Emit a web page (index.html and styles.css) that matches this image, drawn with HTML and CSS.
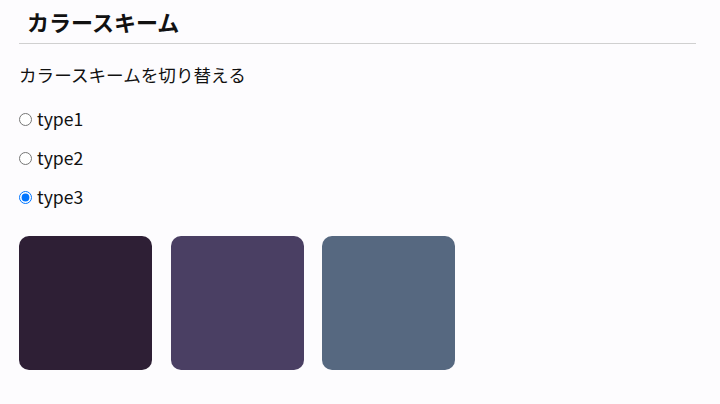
FILE: index.html
```html
<!DOCTYPE html>
<html lang="ja">
<head>
<meta charset="utf-8">
<link rel="stylesheet" href="styles.css">
</head>
<body>
<div class="page">
  <h1 class="title">カラースキーム</h1>
  <p class="desc">カラースキームを切り替える</p>
  <div class="options">
    <label class="opt"><input type="radio" name="t"> type1</label>
    <label class="opt"><input type="radio" name="t"> type2</label>
    <label class="opt"><input type="radio" name="t" checked> type3</label>
  </div>
  <div class="swatches">
    <div class="sw c1"></div>
    <div class="sw c2"></div>
    <div class="sw c3"></div>
  </div>
</div>
</body>
</html>
```
FILE: styles.css
```css
html, body { margin: 0; background: #fdfcfe; }
body { font-family: "Noto Sans CJK JP", "Noto Sans", sans-serif; color: #111; }
.page { width: 677px; margin-left: 19px; }
.title {
  margin: 0;
  padding: 6px 0 7px 8px;
  font-size: 22px;
  line-height: 30px;
  font-weight: 700;
  border-bottom: 1px solid #d0d0d0;
}
.desc { margin: 18px 0 0; font-size: 17.6px; line-height: 26px; }
.options { display: flex; flex-direction: column; gap: 13px; margin-top: 18px; }
.opt { display: flex; align-items: center; gap: 5px; font-size: 17.6px; line-height: 26px; }
.opt input { margin: 0; width: 13px; height: 13px; }
.swatches { display: flex; gap: 18.5px; margin-top: 26px; }
.sw { width: 133px; height: 133.5px; border-radius: 10px; }
.c1 { background: #2e1f35; }
.c2 { background: #4a3f63; }
.c3 { background: #566880; }
```
